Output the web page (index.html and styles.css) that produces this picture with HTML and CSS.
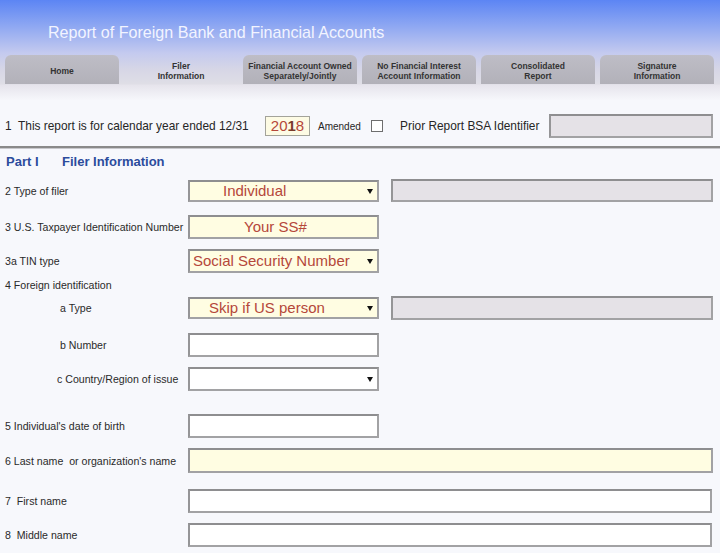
FILE: index.html
```html
<!DOCTYPE html>
<html>
<head>
<meta charset="utf-8">
<link rel="stylesheet" href="styles.css">
</head>
<body>
<div class="top">
  <div class="title">Report of Foreign Bank and Financial Accounts</div>
  <div class="tabs">
    <div class="tab">Home</div>
    <div class="tab active">Filer<br>Information</div>
    <div class="tab">Financial Account Owned<br>Separately/Jointly</div>
    <div class="tab">No Financial Interest<br>Account Information</div>
    <div class="tab">Consolidated<br>Report</div>
    <div class="tab">Signature<br>Information</div>
  </div>
  <div class="fade"></div>
</div>

<div class="row1">
  <span class="r1label">1&nbsp; This report is for calendar year ended 12/31</span>
  <div class="year">20<span class="cursor">1</span>8</div>
  <span class="amended">Amended</span>
  <span class="check"></span>
  <span class="prior">Prior Report BSA Identifier</span>
  <div class="field gray prior-field"></div>
</div>
<div class="rule"></div>

<div class="part"><span class="part-no">Part I</span><span>Filer Information</span></div>

<div class="form">
  <div class="row r2">
    <span class="label">2 Type of filer</span>
    <div class="field yellow main select h22"><span class="val pad35">Individual</span><span class="arrow"></span></div>
    <div class="field gray side h23"></div>
  </div>
  <div class="row r3">
    <span class="label">3 U.S. Taxpayer Identification Number</span>
    <div class="field yellow main"><span class="val pad56">Your SS#</span></div>
  </div>
  <div class="row r3a">
    <span class="label">3a TIN type</span>
    <div class="field yellow main select"><span class="val pad5">Social Security Number</span><span class="arrow"></span></div>
  </div>
  <div class="row r4">
    <span class="label">4 Foreign identification</span>
  </div>
  <div class="row r4a">
    <span class="label sub">a Type</span>
    <div class="field yellow main select h22"><span class="val pad21">Skip if US person</span><span class="arrow"></span></div>
    <div class="field gray side"></div>
  </div>
  <div class="row r4b">
    <span class="label sub">b Number</span>
    <div class="field white main"></div>
  </div>
  <div class="row r4c">
    <span class="label sub2">c Country/Region of issue</span>
    <div class="field white main select"><span class="arrow"></span></div>
  </div>
  <div class="row r5">
    <span class="label">5 Individual's date of birth</span>
    <div class="field white main"></div>
  </div>
  <div class="row r6">
    <span class="label">6 Last name&nbsp; or organization's name</span>
    <div class="field yellow wide h25"></div>
  </div>
  <div class="row r7">
    <span class="label">7&nbsp; First name</span>
    <div class="field white wide2"></div>
  </div>
  <div class="row r8">
    <span class="label">8&nbsp; Middle name</span>
    <div class="field white wide2"></div>
  </div>
</div>
</body>
</html>
```

FILE: styles.css
```css
* { box-sizing: border-box; }
html, body { margin: 0; padding: 0; }
body {
  width: 720px;
  height: 553px;
  overflow: hidden;
  background: #f7f8fc;
  font-family: "Liberation Sans", Arial, sans-serif;
  color: #262626;
}
.top {
  background: linear-gradient(to bottom, #5c85f4 0px, #8ca6f2 25px, #c4caef 53px, #d6d6e6 69px, #dfdee6 84px, #e6e4ec 85px, #f7f8fc 101px);
}
.title {
  height: 55px;
  padding: 23px 0 0 48px;
  font-size: 16.1px;
  line-height: 18px;
  color: #f2f4ff;
}
.tabs {
  display: flex;
  gap: 5px;
  padding-left: 5px;
  height: 29px;
}
.tab {
  width: 114px;
  height: 29px;
  background: linear-gradient(to bottom, #bebdc6, #b2b1b9);
  border-radius: 6px 6px 0 0;
  display: flex;
  align-items: center;
  justify-content: center;
  text-align: center;
  font-size: 8.5px;
  line-height: 10px;
  font-weight: bold;
  color: #333;
  padding-top: 2px;
}
.tab.active { background: transparent; }
.fade { height: 16px; }

.row1 {
  display: flex;
  align-items: center;
  height: 20px;
  margin-top: 16px;
  padding-left: 5px;
  font-size: 11.9px;
}
.r1label { width: 260px; white-space: nowrap; }
.year {
  width: 45px;
  height: 20px;
  border: 1.5px solid #a3a39a;
  background: #fdfbe4;
  color: #b5473a;
  font-size: 15px;
  line-height: 17px;
  text-align: center;
}
.cursor { color: #7a3a2a; font-weight: bold; }
.amended { margin-left: 8px; width: 53px; font-size: 10px; }
.check {
  width: 12px;
  height: 12px;
  border: 1px solid #6e6e6e;
  background: #fff;
}
.prior { margin-left: 17px; width: 149px; white-space: nowrap; }
.prior-field { width: 164px; height: 20px; }

.rule {
  margin-top: 10px;
  background: #8a8a8a;
  border-bottom: 1px solid #c8c8cc;
  height: 3px;
}
.part {
  margin-top: 5px;
  height: 16px;
  padding-left: 6px;
  font-size: 13px;
  line-height: 16px;
  font-weight: bold;
  color: #2c4c9c;
}
.part-no { display: inline-block; width: 56px; }

.form { padding-left: 5px; }
.row {
  display: flex;
  align-items: center;
  font-size: 10.6px;
  color: #2a2a2a;
}
.label { width: 183px; flex: none; white-space: nowrap; }
.label.sub { padding-left: 55px; }
.label.sub2 { padding-left: 52px; }

.field {
  height: 24px;
  border: 2px solid #a2a2a4;
  border-top-color: #8e8e90;
  border-left-color: #959597;
  position: relative;
  display: flex;
  align-items: center;
  flex: none;
}
.yellow { background: #fffde2; }
.gray { background: #e5e2e7; }
.white { background: #ffffff; }
.main { width: 191px; }
.side { width: 322px; margin-left: 12px; }
.wide { width: 525px; }
.wide2 { width: 524px; }
.h22 { height: 22px; }
.h23 { height: 23px; }
.h25 { height: 25px; }

.val {
  font-size: 15px;
  color: #b5473a;
  white-space: nowrap;
  line-height: 18px;
}
.pad35 { padding-left: 33px; }
.pad56 { padding-left: 54px; }
.pad5 { padding-left: 3px; }
.pad21 { padding-left: 19px; }
.arrow {
  position: absolute;
  right: 4px;
  top: 50%;
  margin-top: -2px;
  width: 0;
  height: 0;
  border-left: 3.5px solid transparent;
  border-right: 3.5px solid transparent;
  border-top: 5px solid #111;
}

.r2 { margin-top: 9px; }
.r3 { margin-top: 13px; }
.r3a { margin-top: 10px; }
.r4 { margin-top: 4px; height: 16px; }
.r4a { margin-top: 3px; }
.r4b { margin-top: 13px; }
.r4c { margin-top: 10px; }
.r5 { margin-top: 23px; }
.r6 { margin-top: 10px; }
.r7 { margin-top: 16px; }
.r8 { margin-top: 10px; }
```
